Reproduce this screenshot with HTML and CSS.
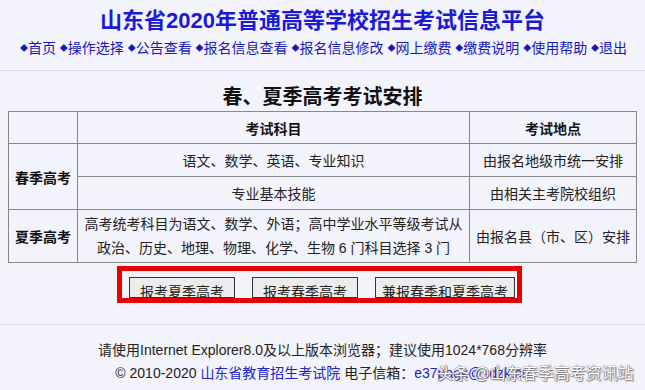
FILE: index.html
```html
<!DOCTYPE html>
<html>
<head>
    <meta charset="utf-8">
    <title>山东省2020年普通高等学校招生考试信息平台</title>
    <link rel="stylesheet" href="styles.css">
</head>
<body>

<div class="header">
    <h1>山东省2020年普通高等学校招生考试信息平台</h1>
    <div class="nav">
        <a href="#"><i>◆</i>首页</a>
        <a href="#"><i>◆</i>操作选择</a>
        <a href="#"><i>◆</i>公告查看</a>
        <a href="#"><i>◆</i>报名信息查看</a>
        <a href="#"><i>◆</i>报名信息修改</a>
        <a href="#"><i>◆</i>网上缴费</a>
        <a href="#"><i>◆</i>缴费说明</a>
        <a href="#"><i>◆</i>使用帮助</a>
        <a href="#"><i>◆</i>退出</a>
    </div>
</div>

<div class="main">
    <h2>春、夏季高考考试安排</h2>
    <table class="plan">
        <tr class="row-head">
            <th class="col-type"></th>
            <th class="col-subject">考试科目</th>
            <th class="col-place">考试地点</th>
        </tr>
        <tr class="row-1">
            <th rowspan="2">春季高考</th>
            <td>语文、数学、英语、专业知识</td>
            <td>由报名地级市统一安排</td>
        </tr>
        <tr class="row-1">
            <td>专业基本技能</td>
            <td>由相关主考院校组织</td>
        </tr>
        <tr class="row-2">
            <th>夏季高考</th>
            <td class="multi">高考统考科目为语文、数学、外语；高中学业水平等级考试从<br>政治、历史、地理、物理、化学、生物 6 门科目选择 3 门</td>
            <td>由报名县（市、区）安排</td>
        </tr>
    </table>

    <div class="choose">
        <div class="choose-box">
            <button class="choose-btn">报考夏季高考</button>
            <button class="choose-btn">报考春季高考</button>
            <button class="choose-btn">兼报春季和夏季高考</button>
        </div>
    </div>
</div>

<div class="footer">
    <p>请使用Internet Explorer8.0及以上版本浏览器；建议使用1024*768分辨率</p>
    <p>© 2010-2020 <a href="#">山东省教育招生考试院</a> 电子信箱：<a href="#">e37pagk@sdzk.cn</a></p>
    <span class="watermark">头条 @山东春季高考资讯站</span>
</div>

</body>
</html>
```

FILE: styles.css
```css
body {
    font-family: "Liberation Sans", "Noto Sans CJK SC", sans-serif;
    margin: 0;
    padding: 0;
    background-color: #f3f3fb;
    color: #222;
    font-size: 14px;
}
.header {
    text-align: center;
    padding: 6px 0 11px;
    border-bottom: 1px solid #dcdce8;
}
.header h1 {
    margin: 0;
    font-size: 22px;
    line-height: 30px;
    color: #1a1ad6;
}
.nav {
    margin-top: 2px;
    line-height: 20px;
    font-size: 14px;
    padding-left: 2px;
}
.nav a {
    color: #1717c0;
    text-decoration: none;
}
.nav i {
    font-style: normal;
    font-size: 8px;
    vertical-align: 2px;
}
.main {
    padding: 12px 8px 0;
}
.main h2 {
    margin: 0;
    text-align: center;
    font-size: 20px;
    line-height: 28px;
    color: #111;
}
.plan {
    width: 100%;
    border-collapse: collapse;
    border: 1px solid #333;
}
.plan th, .plan td {
    border: 1px solid #888;
    text-align: center;
    font-size: 14px;
    padding: 0 4px;
}
.plan th {
    font-weight: bold;
    color: #111;
}
.col-type {
    width: 60px;
}
.col-place {
    width: 158px;
}
.row-head {
    height: 32px;
}
.row-1 {
    height: 33px;
}
.row-2 {
    height: 53px;
}
.multi {
    line-height: 24px;
}
.choose {
    text-align: center;
    margin-top: 3px;
}
.choose-box {
    display: inline-flex;
    gap: 17px;
    border: 5px solid #e80000;
    padding: 6px 2px 0 7px;
    box-sizing: border-box;
    height: 37px;
    overflow: hidden;
    margin-left: -6px;
}
.choose-btn {
    font-family: "Liberation Sans", "Noto Sans CJK SC", sans-serif;
    font-size: 14px;
    background: #ececec;
    border: 1px solid #333;
    color: #222;
    height: 21px;
    padding: 4px 10px 0;
    line-height: 20px;
    overflow: hidden;
    box-sizing: border-box;
    display: block;
}
.choose-btn:last-child {
    padding: 4px 6px 0;
}
.footer {
    position: relative;
    margin-top: 21px;
    border-top: 1px solid #dcdce8;
    padding-top: 14px;
    text-align: center;
}
.footer p {
    margin: 0;
    line-height: 23px;
    font-size: 14px;
    color: #222;
}
.footer a {
    color: #2222cc;
    text-decoration: none;
}
.watermark {
    position: absolute;
    left: 437px;
    top: 35px;
    font-size: 16px;
    color: #fff;
    text-shadow: 0 0 1px #555, 0 0 1px #555, 1px 1px 1px #888;
    white-space: nowrap;
}
```
